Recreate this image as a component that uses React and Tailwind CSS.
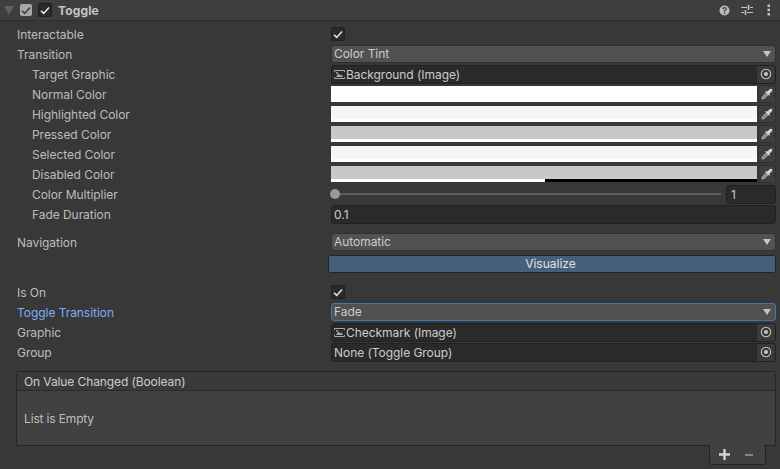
const font = { fontFamily: 'Inter, "Liberation Sans", sans-serif' };

function Check({ className = "" }) {
  return (
    <svg width="10" height="9" viewBox="0 0 10 9" className={className}>
      <path d="M1 4.8 L3.7 7.4 L9 1.4" fill="none" stroke="currentColor" strokeWidth="1.5" />
    </svg>
  );
}

function CheckBox() {
  return (
    <div className="w-[14px] h-[14px] rounded-[2px] bg-[#2a2a2a] border border-[#212121] flex items-center justify-center text-[#e6e6e6]">
      <Check />
    </div>
  );
}

function Row({ label, indent, blue, children, className = "h-5" }) {
  return (
    <div className={"flex items-center pr-1 " + className}>
      <div className={"w-[331px] shrink-0 pt-[2px] text-[12px] tracking-[-0.05px] " + (indent ? "pl-8 " : "pl-[17px] ") + (blue ? "text-[#7baef5]" : "text-[#bdbdbd]")}>
        {label}
      </div>
      <div className="flex-1 min-w-0 flex items-center">{children}</div>
    </div>
  );
}

function Arrow() {
  return (
    <svg width="8" height="6" viewBox="0 0 8 6" className="text-[#c4c4c4]">
      <path d="M0 0 H8 L4 6 Z" fill="currentColor" />
    </svg>
  );
}

function Dropdown({ value, focused }) {
  return (
    <div className={"w-full h-[18px] rounded-[3px] bg-[#515151] flex items-center justify-between pl-[2px] pr-[4px] text-[12px] tracking-[-0.05px] text-[#cccccc] border " + (focused ? "border-[#3a79bb]" : "border-[#303030]")}>
      <span>{value}</span>
      <Arrow />
    </div>
  );
}

function ImageIcon() {
  return (
    <svg width="11" height="9" viewBox="0 0 11 9" className="mr-[1px] shrink-0">
      <path d="M0.5 0.5 H10.5 M0.5 8.5 H10.5 M0.5 0.5 V2 M10.5 0.5 V2 M0.5 7 V8.5 M10.5 7 V8.5" stroke="#a8a8a8" fill="none" />
      <path d="M2 7 L4.5 3.5 L6.5 5.5 L7.5 4.5 L9 7 Z" fill="#a8a8a8" />
      <circle cx="3" cy="3" r="1" fill="#a8a8a8" />
    </svg>
  );
}

function ObjectField({ value, icon }) {
  return (
    <div className="w-full h-[19px] rounded-[3px] bg-[#2a2a2a] border border-[#212121] flex items-center text-[12px] tracking-[-0.05px] text-[#cccccc] overflow-hidden">
      <div className="flex-1 flex items-center pl-[2px] min-w-0">
        {icon && <ImageIcon />}
        <span className="pt-[2px]">{value}</span>
      </div>
      <div className="w-[18px] h-full bg-[#3a3a3a] flex items-center justify-center">
        <svg width="12" height="12" viewBox="0 0 12 12">
          <circle cx="6" cy="6" r="4.7" fill="none" stroke="#c4c4c4" strokeWidth="1.1" />
          <circle cx="6" cy="6" r="2.1" fill="#c4c4c4" />
        </svg>
      </div>
    </div>
  );
}

function Dropper() {
  return (
    <div className="w-[18px] h-[18px] ml-[1px] rounded-[3px] bg-[#3e3e3e] border border-[#303030] flex items-center justify-center">
      <svg width="12" height="12" viewBox="0 0 12 12">
        <path d="M1 11 L1.3 8.8 L5.6 4.5 L7.5 6.4 L3.2 10.7 Z" fill="#8a8a8a" stroke="#b8b8b8" strokeWidth="0.8" />
        <path d="M4.6 3 L6.4 3.6 L8.6 1.2 Q10 0.2 11 1.1 Q11.8 2.2 10.8 3.4 L8.4 5.6 L9 7.4 L7.9 7.6 L4.4 4.1 Z" fill="#d6d6d6" />
      </svg>
    </div>
  );
}

function ColorField({ color, half }) {
  return (
    <>
      <div className="flex-1 h-4 flex flex-col">
        <div className="flex-1" style={{ backgroundColor: color }} />
        <div className="h-[3px] flex bg-white">
          {half && <div className="ml-[214px] flex-1 bg-black" />}
        </div>
      </div>
      <Dropper />
    </>
  );
}

export default function App() {
  return (
    <div style={font} className="w-[780px] h-[469px] bg-[#383838] overflow-hidden flex flex-col">
      <div className="h-[21px] shrink-0 bg-[#3e3e3e] border-b border-[#2e2e2e] flex items-center pl-[4px] pr-[9px]">
        <svg width="10" height="9" viewBox="0 0 10 9" className="text-[#5f5f5f]">
          <path d="M0 0 H10 L5 9 Z" fill="currentColor" />
        </svg>
        <div className="ml-[6px] w-[12px] h-[12px] rounded-[2px] bg-[#a8a8a8] flex items-center justify-center text-[#3a3a3a]">
          <Check />
        </div>
        <div className="ml-[6px] w-[14px] h-[14px] rounded-[2px] bg-[#2a2a2a] border border-[#1f1f1f] flex items-center justify-center text-[#f0f0f0]">
          <Check />
        </div>
        <div className="ml-[6px] pt-[2px] text-[12px] font-bold tracking-[0.15px] text-[#c4c4c4] flex-1">Toggle</div>
        <svg width="11" height="11" viewBox="0 0 11 11">
          <circle cx="5.5" cy="5.5" r="5" fill="#bdbdbd" />
          <path d="M3.8 4.2 Q3.9 2.6 5.5 2.6 Q7.2 2.6 7.2 4 Q7.2 5 5.5 5.7 V6.6" fill="none" stroke="#3e3e3e" strokeWidth="1.3" />
          <rect x="4.8" y="7.4" width="1.4" height="1.4" fill="#3e3e3e" />
        </svg>
        <svg width="12" height="12" viewBox="0 0 12 12" className="ml-[11px]">
          <path d="M0 3.5 H6 M9 3.5 H12 M0 8.5 H3 M6 8.5 H12" stroke="#c4c4c4" />
          <path d="M7.5 1 V6 M4.5 6 V11" stroke="#c4c4c4" strokeWidth="1.6" />
        </svg>
        <svg width="4" height="12" viewBox="0 0 4 12" className="ml-[14px]">
          <rect x="0.5" y="0.5" width="2.5" height="2.5" fill="#c4c4c4" />
          <rect x="0.5" y="4.7" width="2.5" height="2.5" fill="#c4c4c4" />
          <rect x="0.5" y="9" width="2.5" height="2.5" fill="#c4c4c4" />
        </svg>
      </div>

      <div className="pt-[3px]">
        <Row label="Interactable"><CheckBox /></Row>
        <Row label="Transition"><Dropdown value="Color Tint" /></Row>
        <Row label="Target Graphic" indent><ObjectField value="Background (Image)" icon /></Row>
        <Row label="Normal Color" indent><ColorField color="#ffffff" /></Row>
        <Row label="Highlighted Color" indent><ColorField color="#f5f5f5" /></Row>
        <Row label="Pressed Color" indent><ColorField color="#c8c8c8" /></Row>
        <Row label="Selected Color" indent><ColorField color="#f5f5f5" /></Row>
        <Row label="Disabled Color" indent><ColorField color="#c8c8c8" half /></Row>
        <Row label="Color Multiplier" indent>
          <div className="flex-1 h-5 relative flex items-center">
            <div className="w-full mr-[5px] h-[2px] bg-[#5e5e5e]" />
            <div className="absolute left-[-1px] top-[5px] w-[10px] h-[10px] rounded-full bg-[#999999]" />
          </div>
          <div className="w-[50px] h-[19px] rounded-[3px] bg-[#2a2a2a] border border-[#212121] text-[12px] text-[#cccccc] flex items-center pl-[4px] pt-[2px]">1</div>
        </Row>
        <Row label="Fade Duration" indent>
          <div className="w-full h-[19px] rounded-[3px] bg-[#2a2a2a] border border-[#212121] text-[12px] text-[#cccccc] flex items-center pl-[2px] pt-[2px]">0.1</div>
        </Row>
      </div>

      <div className="pt-[8px]">
        <Row label="Navigation"><Dropdown value="Automatic" /></Row>
        <div className="h-[22px] flex pl-[328px] pr-1 pt-[3px]">
          <div className="w-full h-[18px] rounded-[3px] bg-[#46607c] border border-[#242424] text-[12px] text-[#e0e0e0] flex items-center justify-center pr-[3px]">
            <span>Visualize</span>
          </div>
        </div>
      </div>

      <div className="pt-[8px]">
        <Row label="Is On"><CheckBox /></Row>
        <Row label="Toggle Transition" blue><Dropdown value="Fade" focused /></Row>
        <Row label="Graphic"><ObjectField value="Checkmark (Image)" icon /></Row>
        <Row label="Group"><ObjectField value="None (Toggle Group)" /></Row>
      </div>

      <div className="mt-[9px] ml-4 mr-1 h-[75px] shrink-0 rounded-[3px] border border-[#242424] bg-[#414141] flex flex-col overflow-hidden">
        <div className="h-[19px] shrink-0 bg-[#3a3a3a] border-b border-[#2b2b2b] text-[12px] tracking-[-0.1px] text-[#cccccc] flex items-center pl-[7px] pt-[2px]">On Value Changed (Boolean)</div>
        <div className="flex-1 flex items-center pl-[7px] pt-[2px] text-[12px] tracking-[-0.15px] text-[#bdbdbd]">List is Empty</div>
      </div>
      <div className="flex justify-end pr-[14px] -mt-px relative">
        <div className="w-[57px] h-[20px] bg-[#414141] border border-t-0 border-[#242424] rounded-b-[3px] flex items-center pl-[9px]">
          <svg width="11" height="11" viewBox="0 0 11 11">
            <path d="M4.3 0 H6.7 V4.3 H11 V6.7 H6.7 V11 H4.3 V6.7 H0 V4.3 H4.3 Z" fill="#d2d2d2" />
          </svg>
          <div className="ml-[15px] w-[8px] h-[2px] bg-[#858585]" />
        </div>
      </div>
    </div>
  );
}
